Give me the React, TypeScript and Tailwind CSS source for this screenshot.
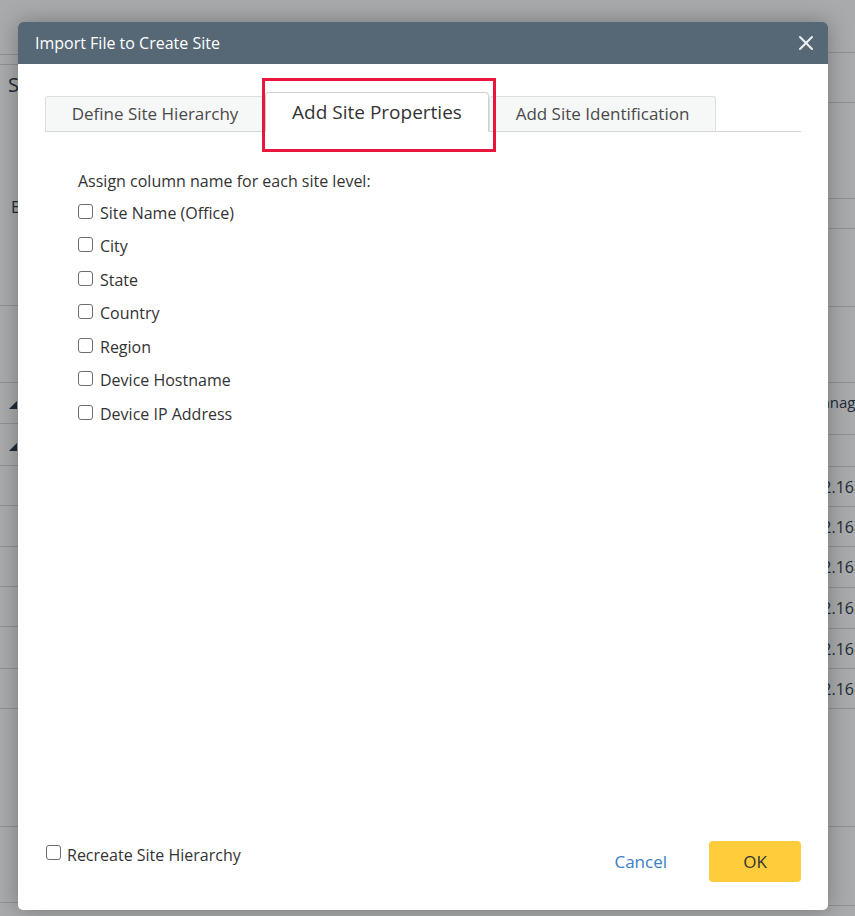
import React from "react";

// Background page slivers visible beside the modal. Line positions are page y-coords.
const leftLines = [55, 65, 306, 383, 424, 466, 506, 547, 587, 627, 669, 709, 827, 903];
const rightLines = [53, 103, 199, 229, 307, 383, 435, 467, 507, 547, 588, 629, 669, 709, 827, 906];

const properties = [
  "Site Name (Office)",
  "City",
  "State",
  "Country",
  "Region",
  "Device Hostname",
  "Device IP Address",
];

function Segments({ lines, render }: { lines: number[]; render?: (i: number) => React.ReactNode }) {
  let prev = 0;
  return (
    <div className="flex flex-col">
      {lines.map((y, i) => {
        const h = y - prev;
        prev = y;
        return (
          <div
            key={y}
            className="relative flex items-center border-b border-[#909192]"
            style={{ height: h }}
          >
            {render?.(i)}
          </div>
        );
      })}
    </div>
  );
}

function SortTriangle() {
  return (
    <svg width="8" height="8" viewBox="0 0 8 8" className="ml-[9px] mt-[4px]">
      <polygon points="8,0 8,8 0,8" fill="#1f2a36" />
    </svg>
  );
}

function Box() {
  return (
    <span className="inline-block h-[15px] w-[15px] shrink-0 rounded-[3px] border border-[#6f6f6f] bg-white" />
  );
}

function Tab({ label, active }: { label: string; active?: boolean }) {
  if (active) {
    return (
      <div className="relative -mb-px flex h-[40px] w-[224px] items-center justify-center rounded-t-[4px] border border-[#cdd1d4] border-b-white bg-white text-[19px] text-[#333]">
        {label}
        <div className="pointer-events-none absolute -left-[4px] -top-[15px] h-[74px] w-[234px] border-[3px] border-[#e8163c]" />
      </div>
    );
  }
  return (
    <div className="-mb-px flex h-[36px] items-center justify-center rounded-t-[3px] border border-[#dcdfe1] border-b-[#d4d7d9] bg-[#f6f7f7] text-[17px] text-[#4a4a4a]">
      {label}
    </div>
  );
}

export default function App() {
  return (
    <div className="relative h-[916px] w-[855px] overflow-hidden bg-[#a9aaab] font-['Open_Sans',sans-serif]">
      {/* dimmed page behind the modal */}
      <div className="flex h-full">
        <div className="w-[18px] overflow-hidden">
          <Segments
            lines={leftLines}
            render={(i) => {
              if (i === 2)
                return (
                  <div className="flex h-full flex-col self-start pl-[8px] text-[#222c38]">
                    <span className="mt-[8px] text-[20px] leading-[24px]">S</span>
                    <span className="mt-[100px] pl-[3px] text-[16px] leading-[20px]">E</span>
                  </div>
                );
              if (i === 4 || i === 5) return <SortTriangle />;
              return null;
            }}
          />
        </div>
        <div className="flex-1" />
        <div className="w-[27px] overflow-hidden">
          <Segments
            lines={rightLines}
            render={(i) => {
              if (i === 6)
                return (
                  <span className="-ml-[20px] mb-[12px] whitespace-nowrap text-[15px] text-[#1f2a36]">
                    Management IP
                  </span>
                );
              if (i >= 8 && i <= 13)
                return (
                  <span className="-ml-[24px] whitespace-nowrap text-[16px] text-[#1f2a36]">
                    192.168.1.10
                  </span>
                );
              return null;
            }}
          />
        </div>
      </div>

      {/* modal */}
      <div className="absolute left-[18px] top-[22px] flex h-[888px] w-[810px] flex-col overflow-hidden rounded-[5px] bg-white shadow-[0_0_22px_rgba(0,0,0,0.3)]">
        <div className="flex h-[42px] shrink-0 items-center justify-between bg-[#566875] pl-[17px] pr-[14px]">
          <span className="text-[16px] text-white">Import File to Create Site</span>
          <svg width="16" height="16" viewBox="0 0 16 16">
            <path d="M2 2 L14 14 M14 2 L2 14" stroke="#eef1f3" strokeWidth="2" strokeLinecap="round" />
          </svg>
        </div>

        <div className="flex flex-1 flex-col px-[27px]">
          <div className="flex items-end border-b border-[#d4d7d9] pt-[28px]">
            <div className="w-[220px]">
              <Tab label="Define Site Hierarchy" />
            </div>
            <Tab label="Add Site Properties" active />
            <div className="w-[227px]">
              <Tab label="Add Site Identification" />
            </div>
          </div>

          <div className="pl-[33px] pt-[39px]">
            <div className="text-[16px] leading-[20px] text-[#333]">
              Assign column name for each site level:
            </div>
            <div className="mt-[5px] flex flex-col">
              {properties.map((p) => (
                <label key={p} className="flex h-[33.5px] items-center gap-[7px]">
                  <span className="mb-[3px] flex">
                    <Box />
                  </span>
                  <span className="text-[16px] text-[#333]">{p}</span>
                </label>
              ))}
            </div>
          </div>

          <div className="mt-auto flex items-start justify-between pb-[28px] pl-[1px]">
            <label className="mt-[4px] flex items-start gap-[6px]">
              <Box />
              <span className="text-[16px] leading-[20px] text-[#333]">Recreate Site Hierarchy</span>
            </label>
            <div className="flex items-center gap-[42px]">
              <button className="text-[17px] text-[#3b80c4]">Cancel</button>
              <button className="h-[41px] w-[92px] rounded-[4px] bg-[#ffcd3c] text-[17px] text-[#333]">
                OK
              </button>
            </div>
          </div>
        </div>
      </div>
    </div>
  );
}
